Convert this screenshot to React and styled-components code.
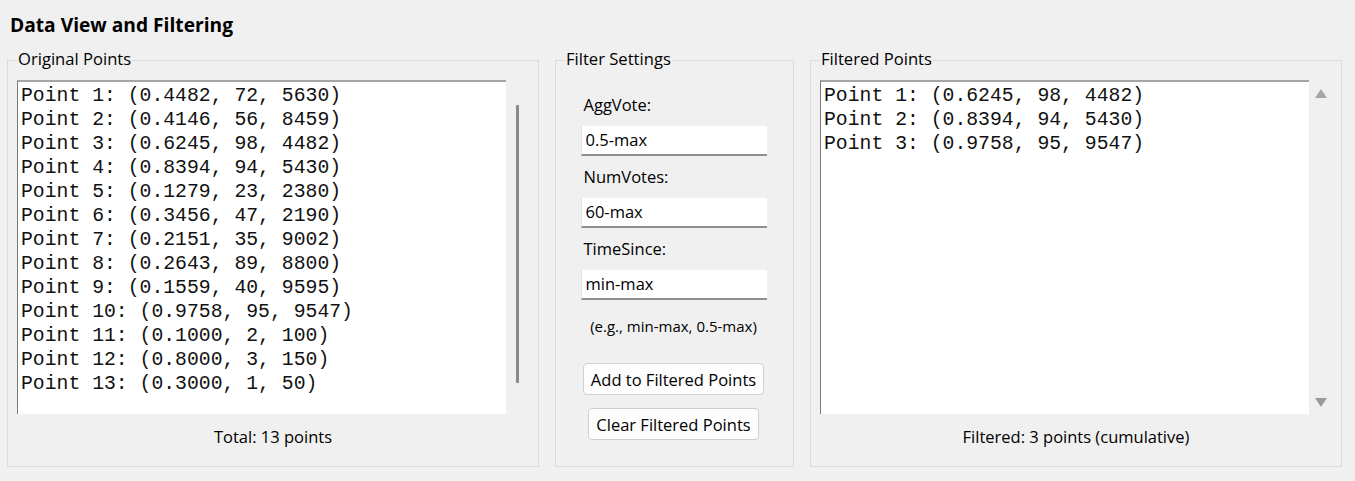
import React from "react";
import styled, { createGlobalStyle } from "styled-components";

const uiFont = `"Open Sans", "Noto Sans", sans-serif`;
const monoFont = `"Liberation Mono", "Courier New", monospace`;

const GlobalStyle = createGlobalStyle`
  html, body {
    margin: 0;
    background: #f0f0f0;
  }
  body {
    font-family: ${uiFont};
    color: #000;
  }
`;

const originalPoints = [
  [0.4482, 72, 5630],
  [0.4146, 56, 8459],
  [0.6245, 98, 4482],
  [0.8394, 94, 5430],
  [0.1279, 23, 2380],
  [0.3456, 47, 2190],
  [0.2151, 35, 9002],
  [0.2643, 89, 8800],
  [0.1559, 40, 9595],
  [0.9758, 95, 9547],
  [0.1, 2, 100],
  [0.8, 3, 150],
  [0.3, 1, 50],
];

const filteredPoints = [
  [0.6245, 98, 4482],
  [0.8394, 94, 5430],
  [0.9758, 95, 9547],
];

const filters = [
  { label: "AggVote:", value: "0.5-max" },
  { label: "NumVotes:", value: "60-max" },
  { label: "TimeSince:", value: "min-max" },
];

const App = () => {
  return (
    <>
      <GlobalStyle />
      <Page>
        <Title>Data View and Filtering</Title>
        <Row>
          <Frame width={532}>
            <Legend>Original Points</Legend>
            <ListArea>
              <ListBox>
                {originalPoints.map((p, i) => (
                  <Line key={i}>
                    Point {i + 1}: ({p[0].toFixed(4)}, {p[1]}, {p[2]})
                  </Line>
                ))}
              </ListBox>
              <ScrollBar>
                <Thumb />
              </ScrollBar>
            </ListArea>
            <Footer>Total: 13 points</Footer>
          </Frame>

          <Frame width={239}>
            <Legend>Filter Settings</Legend>
            <Settings>
              {filters.map((f) => (
                <Field key={f.label}>
                  <FieldLabel>{f.label}</FieldLabel>
                  <Entry>{f.value}</Entry>
                </Field>
              ))}
              <Hint>(e.g., min-max, 0.5-max)</Hint>
              <Button first>Add to Filtered Points</Button>
              <Button>Clear Filtered Points</Button>
            </Settings>
          </Frame>

          <Frame width={532}>
            <Legend>Filtered Points</Legend>
            <ListArea>
              <ListBox>
                {filteredPoints.map((p, i) => (
                  <Line key={i}>
                    Point {i + 1}: ({p[0].toFixed(4)}, {p[1]}, {p[2]})
                  </Line>
                ))}
              </ListBox>
              <ScrollBar arrows>
                <Arrow />
                <Arrow down />
              </ScrollBar>
            </ListArea>
            <Footer>Filtered: 3 points (cumulative)</Footer>
          </Frame>
        </Row>
      </Page>
    </>
  );
};

export default App;

const Page = styled.div`
  padding: 12px 0 0 7px;
`;

const Title = styled.h1`
  margin: 0 0 24px 3px;
  font-family: ${uiFont};
  font-size: 19.2px;
  line-height: 25px;
  font-weight: 700;
`;

const Row = styled.div`
  display: flex;
  gap: 16px;
  margin-top: -1px;
`;

const Frame = styled.section`
  position: relative;
  box-sizing: border-box;
  width: ${(props) => props.width}px;
  height: 407px;
  border: 1px solid #dadada;
  padding: 19px 9px 0;
  display: flex;
  flex-direction: column;
`;

const Legend = styled.div`
  position: absolute;
  top: -12px;
  left: 9px;
  padding: 0 1px;
  background: #f0f0f0;
  font-size: 16.6px;
  line-height: 20px;
`;

const ListArea = styled.div`
  display: flex;
  height: 334px;
`;

const ListBox = styled.div`
  flex: 1;
  box-sizing: border-box;
  background: #fff;
  border-top: 2px solid #a5a5a5;
  border-left: 1px solid #7a7a7a;
  padding: 2px 3px;
  font-family: ${monoFont};
  font-size: 19.75px;
  line-height: 24px;
  color: #111;
  white-space: pre;
  overflow: hidden;
`;

const Line = styled.div``;

const ScrollBar = styled.div`
  width: 23px;
  display: flex;
  flex-direction: column;
  align-items: center;
  justify-content: ${(props) => (props.arrows ? "space-between" : "flex-start")};
  padding: ${(props) => (props.arrows ? "9px 0 7px" : "25px 0 0")};
  box-sizing: border-box;
`;

const Thumb = styled.div`
  width: 3px;
  height: 278px;
  background: #8a8a8a;
  border-radius: 1px;
`;

const Arrow = styled.div`
  width: 0;
  height: 0;
  border-left: 6.5px solid transparent;
  border-right: 6.5px solid transparent;
  ${(props) =>
    props.down ? "border-top: 9px solid #9a9a9a;" : "border-bottom: 9px solid #a6a6a6;"}
`;

const Footer = styled.div`
  margin-top: 11px;
  text-align: center;
  font-size: 16.5px;
  line-height: 24px;
`;

const Settings = styled.div`
  display: flex;
  flex-direction: column;
  align-items: center;
  padding-top: 13px;
  margin-left: -2px;
`;

const Field = styled.div`
  width: 186px;
  margin-bottom: 9px;
`;

const FieldLabel = styled.div`
  padding-left: 3px;
  margin-bottom: 9px;
  font-size: 16.5px;
  line-height: 24px;
`;

const Entry = styled.div`
  box-sizing: border-box;
  height: 30px;
  background: #fff;
  border-bottom: 2px solid #8f8f8f;
  border-left: 1px solid #e3e3e3;
  padding: 0 4px;
  font-size: 16.5px;
  line-height: 28px;
`;

const Hint = styled.div`
  margin-top: 5px;
  font-size: 15px;
  line-height: 24px;
`;

const Button = styled.button`
  margin-top: ${(props) => (props.first ? "25px" : "13px")};
  height: 32px;
  padding: 0 7px;
  background: #fdfdfd;
  border: 1px solid #d0d0d0;
  border-radius: 4px;
  font-family: ${uiFont};
  font-size: 16.5px;
  color: #000;
`;
